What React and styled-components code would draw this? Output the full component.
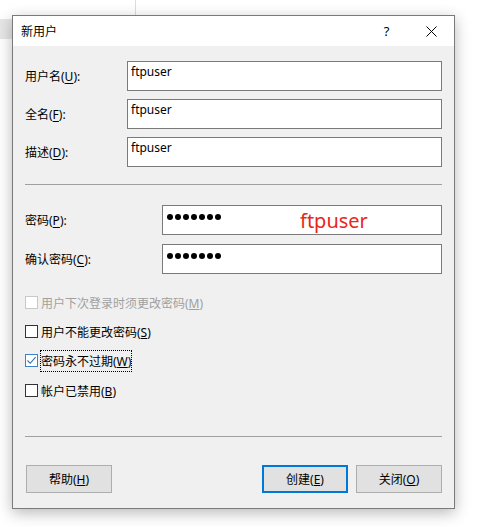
import styled, { createGlobalStyle } from 'styled-components';

const GlobalStyle = createGlobalStyle`
    body {
        margin: 0;
        background: #ffffff;
        font-family: "Noto Sans", "Noto Sans CJK SC", sans-serif;
        font-size: 12px;
        color: #000;
    }
`;

const App = () => {
    return (
        <>
        <GlobalStyle />
        <Page>
            <BackStrip />
            <BackLine />
            <Dialog>
                <TitleBar>
                    <Title>新用户</Title>
                    <TitleButton>?</TitleButton>
                    <TitleButton>
                        <svg width="11" height="11" viewBox="0 0 11 11">
                            <path d="M0.5 0.5 L10.5 10.5 M10.5 0.5 L0.5 10.5" stroke="#000" strokeWidth="1" fill="none" />
                        </svg>
                    </TitleButton>
                </TitleBar>

                <Body>
                    <Group>
                        <Field $labelWidth={102}>
                            <Label>用户名(<u>U</u>):</Label>
                            <TextBox>ftpuser</TextBox>
                        </Field>
                        <Field $labelWidth={102}>
                            <Label>全名(<u>F</u>):</Label>
                            <TextBox>ftpuser</TextBox>
                        </Field>
                        <Field $labelWidth={102}>
                            <Label>描述(<u>D</u>):</Label>
                            <TextBox>ftpuser</TextBox>
                        </Field>
                    </Group>

                    <Separator $top={17} $bottom={20} />

                    <Group $gap={9}>
                        <Field $labelWidth={137}>
                            <Label>密码(<u>P</u>):</Label>
                            <TextBox>
                                <Dots>{Array.from({ length: 7 }).map((_, i) => <Dot key={i} />)}</Dots>
                                <Note>ftpuser</Note>
                            </TextBox>
                        </Field>
                        <Field $labelWidth={137}>
                            <Label>确认密码(<u>C</u>):</Label>
                            <TextBox>
                                <Dots>{Array.from({ length: 7 }).map((_, i) => <Dot key={i} />)}</Dots>
                            </TextBox>
                        </Field>
                    </Group>

                    <Checks>
                        <CheckRow $disabled>
                            <Box $disabled />
                            <span>用户下次登录时须更改密码(<u>M</u>)</span>
                        </CheckRow>
                        <CheckRow>
                            <Box />
                            <span>用户不能更改密码(<u>S</u>)</span>
                        </CheckRow>
                        <CheckRow>
                            <Box $checked>
                                <svg width="11" height="11" viewBox="0 0 11 11">
                                    <path d="M1.5 5.5 L4.2 8.3 L9.6 2.2" stroke="#2b6fb8" strokeWidth="1.1" fill="none" />
                                </svg>
                            </Box>
                            <Focus>密码永不过期(<u>W</u>)</Focus>
                        </CheckRow>
                        <CheckRow $height={31}>
                            <Box />
                            <span>帐户已禁用(<u>B</u>)</span>
                        </CheckRow>
                    </Checks>

                    <Separator $top={30} $bottom={28} />

                    <Buttons>
                        <Button>帮助(<u>H</u>)</Button>
                        <Spacer />
                        <Button $default>创建(<u>E</u>)</Button>
                        <Button>关闭(<u>O</u>)</Button>
                    </Buttons>
                </Body>
            </Dialog>
        </Page>
        </>
    );
}

const Page = styled.div`
    position: relative;
    width: 486px;
    height: 527px;
    overflow: hidden;
    padding: 15px 0 0 12px;
    box-sizing: border-box;
`;

const BackStrip = styled.div`
    position: absolute;
    left: 0;
    top: 19px;
    width: 40px;
    height: 20px;
    background: #e6e6e6;
`;

const BackLine = styled.div`
    position: absolute;
    left: 135px;
    top: 0;
    width: 1px;
    height: 16px;
    background: #dcdcdc;
`;

const Dialog = styled.div`
    position: relative;
    width: 443px;
    box-sizing: border-box;
    border: 1px solid #7a7a7a;
    background: #f0f0f0;
    box-shadow: 0 4px 14px rgba(0, 0, 0, 0.28);
`;

const TitleBar = styled.div`
    display: flex;
    align-items: center;
    height: 30px;
    background: #ffffff;
    padding-left: 8px;
`;

const Title = styled.div`
    flex: 1;
    font-size: 12px;
`;

const TitleButton = styled.div`
    width: 45px;
    height: 30px;
    display: flex;
    align-items: center;
    justify-content: center;
    font-size: 13px;
`;

const Body = styled.div`
    padding: 15px 12px 15px;
`;

const Group = styled.div`
    display: flex;
    flex-direction: column;
    gap: ${(p) => p.$gap ?? 8}px;
`;

const Field = styled.div`
    display: grid;
    grid-template-columns: ${(p) => p.$labelWidth}px 1fr;
    align-items: center;
`;

const Label = styled.div`
    font-size: 12px;
    u {
        text-decoration-thickness: 1px;
        text-underline-offset: 2px;
    }
`;

const TextBox = styled.div`
    position: relative;
    height: 30px;
    box-sizing: border-box;
    border: 1px solid #7a7a7a;
    background: #ffffff;
    padding: 2px 3px;
    line-height: 16px;
    font-size: 12px;
`;

const Dots = styled.div`
    display: flex;
    gap: 2px;
    padding: 6px 0 0 1px;
`;

const Dot = styled.span`
    width: 6px;
    height: 6px;
    border-radius: 50%;
    background: #000;
`;

const Note = styled.span`
    position: absolute;
    left: 137px;
    top: 3px;
    font-size: 20px;
    line-height: 24px;
    color: #e8261c;
`;

const Separator = styled.div`
    height: 1px;
    background: #a0a0a0;
    margin: ${(p) => p.$top}px 0 ${(p) => p.$bottom}px;
`;

const Checks = styled.div`
    display: flex;
    flex-direction: column;
    margin-top: 14px;
`;

const CheckRow = styled.div`
    display: flex;
    align-items: center;
    gap: 3px;
    height: ${(p) => p.$height ?? 29}px;
    color: ${(p) => (p.$disabled ? '#a0a0a0' : '#000')};
`;

const Box = styled.div`
    width: 13px;
    height: 13px;
    box-sizing: border-box;
    background: #ffffff;
    border: 1px solid ${(p) => (p.$disabled ? '#c8c8c8' : p.$checked ? '#3b82c9' : '#333333')};
    display: flex;
    align-items: center;
    justify-content: center;
`;

const Focus = styled.span`
    outline: 1px dotted #000;
    outline-offset: 0;
    padding: 1px 0;
`;

const Buttons = styled.div`
    display: flex;
    gap: 8px;
    padding-left: 1px;
`;

const Spacer = styled.div`
    flex: 1;
`;

const Button = styled.div`
    width: 86px;
    height: 28px;
    box-sizing: border-box;
    display: flex;
    align-items: center;
    justify-content: center;
    background: #e1e1e1;
    border: ${(p) => (p.$default ? '2px solid #0078d7' : '1px solid #adadad')};
    font-size: 12px;
`;

export default App;
